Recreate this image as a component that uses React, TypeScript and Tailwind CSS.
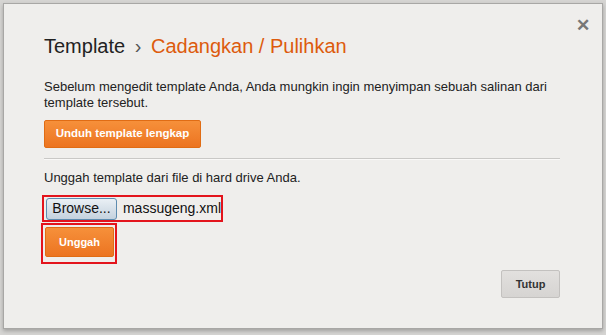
export default function App() {
  return (
    <div className="h-[335px] w-[606px] overflow-hidden bg-[#d6d5d3] pl-[3px] pt-[3px] font-['Liberation_Sans',Arial,sans-serif]">
      <div className="relative h-[326px] w-[600px] border border-[#a8a7a5] bg-[#efeeec] pl-[40px] pr-[42px] pt-[30px] shadow-[0_2px_4px_rgba(0,0,0,0.25)]">
        <button
          type="button"
          aria-label="Close"
          className="absolute right-[12px] top-[13px] text-[#777] text-[17px] font-bold leading-none"
        >
          ✕
        </button>

        <h2 className="text-[20px] leading-[24px] text-[#222]">
          Template <span className="mx-[4px] text-[#555]">›</span>{" "}
          <span className="text-[#dd5b0d]">Cadangkan / Pulihkan</span>
        </h2>

        <p className="mt-[21px] text-[13px] leading-[16px] text-[#222]">
          Sebelum mengedit template Anda, Anda mungkin ingin menyimpan sebuah salinan dari template tersebut.
        </p>

        <button
          type="button"
          className="mt-[9px] h-[28px] w-[157px] rounded-[2px] border border-[#e06c14] bg-gradient-to-b from-[#f6903a] to-[#ec7420] text-[11.5px] font-bold text-white"
        >
          Unduh template lengkap
        </button>

        <div className="mt-[10px] h-[2px] border-t border-[#c9c8c6] bg-white/60" />

        <p className="mt-[10px] text-[13px] leading-[16px] text-[#222]">
          Unggah template dari file di hard drive Anda.
        </p>

        <div className="mt-[9px] -ml-[2px] flex h-[27px] w-[181px] items-center border-2 border-[#e3141c] pl-[2px]">
          <span className="flex h-[22px] w-[74px] items-center justify-center rounded-[3px] border border-[#5d8cb0] bg-gradient-to-b from-[#eaf0f5] to-[#c4d2de] text-[14px] text-[#111]">
            Browse...
          </span>
          <span className="ml-[6px] text-[14px] text-[#111]">massugeng.xml</span>
        </div>

        <div className="-ml-[3px] mt-[1px] w-[76px] border-2 border-[#e3141c] pb-[5px] pl-[2px] pt-[2px]">
          <button
            type="button"
            className="h-[30px] w-[69px] rounded-[2px] border border-[#e06c14] bg-gradient-to-b from-[#f6903a] to-[#ec7420] text-[11px] font-bold text-white"
          >
            Unggah
          </button>
        </div>

        <div className="mt-[6px] flex justify-end">
          <button
            type="button"
            className="h-[28px] w-[59px] rounded-[2px] border border-[#c3c1bf] bg-gradient-to-b from-[#e2e0de] to-[#d6d4d2] text-[11px] font-bold text-[#333]"
          >
            Tutup
          </button>
        </div>
      </div>
    </div>
  );
}
